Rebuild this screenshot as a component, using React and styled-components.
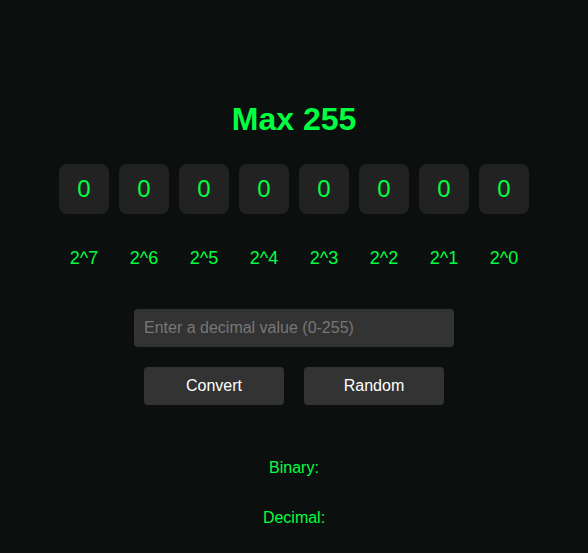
import { useState } from 'react'
import styled, { createGlobalStyle } from 'styled-components'

const GlobalStyle = createGlobalStyle`
    body {
        margin: 0;
        background: #0b0f0e;
        font-family: "Liberation Sans", Arial, sans-serif;
    }
`

const powers = [7, 6, 5, 4, 3, 2, 1, 0]

export default function App(){
    const [bits, setBits] = useState([0, 0, 0, 0, 0, 0, 0, 0])
    const [value, setValue] = useState('')
    const [result, setResult] = useState(null)

    function toggle(i){
        const next = [...bits]
        next[i] = next[i] ? 0 : 1
        setBits(next)
    }

    function convert(){
        const n = parseInt(value, 10)
        if(isNaN(n) || n < 0 || n > 255) return
        setBits(n.toString(2).padStart(8, '0').split('').map(Number))
        setResult(n)
    }

    function random(){
        const n = Math.floor(Math.random() * 256)
        setValue(String(n))
        setBits(n.toString(2).padStart(8, '0').split('').map(Number))
        setResult(n)
    }

    return(
        <Page>
            <GlobalStyle />
            <Title>Max 255</Title>
            <Row>
                {bits.map((b, i) => <Bit key={i} onClick={() => toggle(i)}>{b}</Bit>)}
            </Row>
            <Row>
                {powers.map(p => <Power key={p}>2^{p}</Power>)}
            </Row>
            <Input
                placeholder="Enter a decimal value (0-255)"
                value={value}
                onChange={e => setValue(e.target.value)}
            />
            <Buttons>
                <Button onClick={convert}>Convert</Button>
                <Button onClick={random}>Random</Button>
            </Buttons>
            <Output>Binary: {result !== null ? bits.join('') : ''}</Output>
            <Output>Decimal: {result !== null ? result : ''}</Output>
        </Page>
    )
}

const Page = styled.div`
    display: flex;
    flex-direction: column;
    align-items: center;
    min-height: 553px;
    padding-top: 100px;
    box-sizing: border-box;
`

const Title = styled.h1`
    margin: 0 0 26px;
    color: #00ff41;
    font-size: 32px;
    line-height: 38px;
    font-weight: bold;
`

const Row = styled.div`
    display: flex;
    gap: 10px;
    & + & {
        margin-top: 32px;
    }
`

const Bit = styled.div`
    width: 50px;
    height: 50px;
    display: flex;
    align-items: center;
    justify-content: center;
    background: #222222;
    border-radius: 8px;
    color: #00ff41;
    font-size: 24px;
    cursor: pointer;
`

const Power = styled.div`
    width: 50px;
    text-align: center;
    color: #00ff41;
    font-size: 18px;
    line-height: 24px;
`

const Input = styled.input`
    margin-top: 39px;
    width: 320px;
    height: 38px;
    box-sizing: border-box;
    padding: 0 10px;
    background: #333333;
    border: none;
    border-radius: 4px;
    color: #ffffff;
    font-family: "Liberation Sans", Arial, sans-serif;
    font-size: 16px;
    outline: none;
    &::placeholder {
        color: #777777;
    }
`

const Buttons = styled.div`
    display: flex;
    gap: 20px;
    margin-top: 20px;
`

const Button = styled.button`
    width: 140px;
    height: 38px;
    background: #333333;
    border: none;
    border-radius: 4px;
    color: #ffffff;
    font-family: "Liberation Sans", Arial, sans-serif;
    font-size: 16px;
    cursor: pointer;
`

const Output = styled.p`
    margin: 53px 0 0;
    color: #00ff41;
    font-size: 16px;
    line-height: 20px;
    & + & {
        margin-top: 30px;
    }
`
